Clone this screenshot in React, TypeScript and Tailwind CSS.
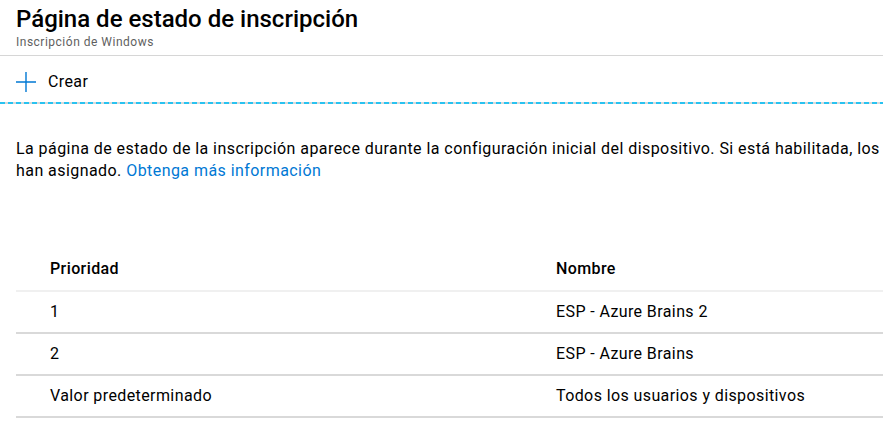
const rows = [
  { prio: '1', name: 'ESP - Azure Brains 2' },
  { prio: '2', name: 'ESP - Azure Brains' },
  { prio: 'Valor predeterminado', name: 'Todos los usuarios y dispositivos' },
]

export default function App() {
  return (
    <div className="w-[883px] h-[447px] overflow-hidden bg-white text-[#000] font-['Roboto','Liberation_Sans',sans-serif]">
      {/* Header */}
      <div className="px-4 pt-[3px] h-[56px] border-b border-[#d6d6d6]">
        <h1 className="text-[24px] leading-[32px] font-medium">Página de estado de inscripción</h1>
        <p className="text-[12px] leading-[14px] text-[#5f5f5f] tracking-[0.5px]">Inscripción de Windows</p>
      </div>

      {/* Command bar */}
      <div className="h-[46px] pl-4 pt-[5px] flex items-center gap-3">
        <svg width="20" height="20" viewBox="0 0 20 20" className="shrink-0">
          <path d="M10 0v20M0 10h20" stroke="#0078d4" strokeWidth="1.4" fill="none" />
        </svg>
        <span className="text-[16px] tracking-[0.4px]">Crear</span>
      </div>
      <div className="h-[2px] bg-[repeating-linear-gradient(90deg,#29c2f0_0_5px,#d9d9d9_5px_8px)]" />

      {/* Description */}
      <p className="px-4 pt-[34px] text-[16px] leading-[22px] whitespace-nowrap tracking-[0.44px]">
        La página de estado de la inscripción aparece durante la configuración inicial del dispositivo. Si está habilitada, los
        <br />
        han asignado. <span className="text-[#0078d4]">Obtenga más información</span>
      </p>

      {/* Table */}
      <div className="ml-4 mt-[66px] text-[16px] tracking-[0.4px]">
        <div className="h-[44px] flex items-center border-b-2 border-[#f0f0f0] font-medium">
          <div className="w-[540px] pl-[34px]">Prioridad</div>
          <div>Nombre</div>
        </div>
        {rows.map((r) => (
          <div key={r.prio} className="h-[42px] flex items-center border-b-2 border-[#d9d9d9]">
            <div className="w-[540px] pl-[34px]">{r.prio}</div>
            <div>{r.name}</div>
          </div>
        ))}
      </div>
    </div>
  )
}
